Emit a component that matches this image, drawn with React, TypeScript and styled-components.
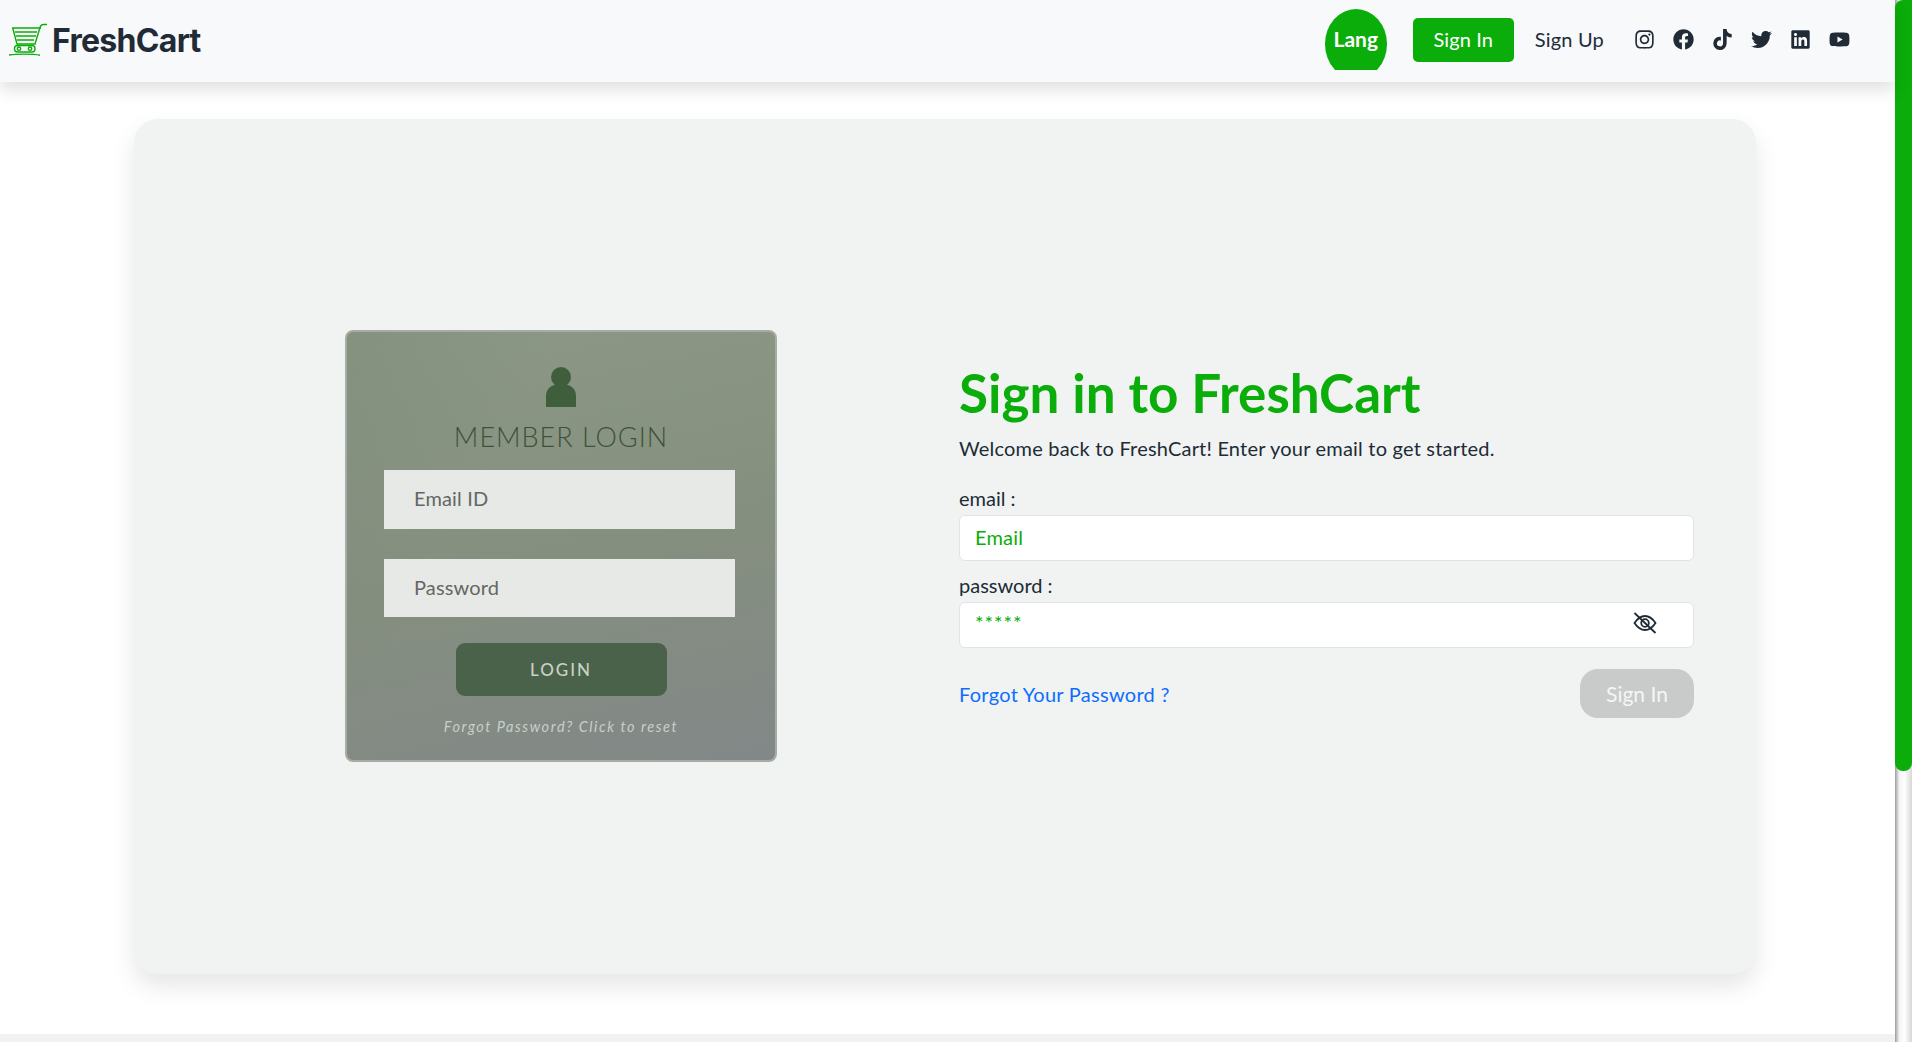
import { createGlobalStyle } from 'styled-components';
import styled from 'styled-components';
import { FaInstagram, FaFacebook, FaTiktok, FaTwitter, FaLinkedin, FaYoutube } from 'react-icons/fa';

const GlobalStyle = createGlobalStyle`
  html, body {
    margin: 0;
    height: 100%;
    overflow: hidden;
    background: #fff;
  }
  * {
    box-sizing: border-box;
  }
`;

const Shell = styled.div`
  display: flex;
  width: 1912px;
  height: 1042px;
  overflow: hidden;
  font-family: 'Lato', 'Open Sans', sans-serif;
`;

const Page = styled.div`
  flex: 1;
  min-width: 0;
  display: flex;
  flex-direction: column;
`;

const Navbar = styled.nav`
  height: 82px;
  flex: none;
  display: flex;
  align-items: flex-start;
  padding: 0 46px 0 8px;
  background: #f8f9fb;
  box-shadow: 0 8px 16px rgba(0, 0, 0, 0.12);
  position: relative;
  z-index: 2;
`;

const Brand = styled.a`
  display: flex;
  align-items: center;
  gap: 4px;
  height: 80px;
  font-family: 'Inter', sans-serif;
  font-weight: 700;
  font-size: 32px;
  letter-spacing: -0.7px;
  color: #212b36;
`;

const NavRight = styled.div`
  margin-left: auto;
  display: flex;
  align-items: flex-start;
`;

const LangClip = styled.div`
  width: 62px;
  height: 61px;
  margin-top: 9px;
  overflow: hidden;
`;

const LangCircle = styled.div`
  width: 62px;
  height: 70px;
  border-radius: 50%;
  background: #0aad0a;
  color: #fff;
  font-weight: 700;
  font-size: 21px;
  display: flex;
  align-items: flex-start;
  justify-content: center;
  padding-top: 17px;
`;

const SignInButton = styled.a`
  width: 101px;
  height: 44px;
  margin: 18px 0 0 26px;
  padding-bottom: 2px;
  border-radius: 5px;
  background: #0aad0a;
  color: #fff;
  font-size: 20px;
  letter-spacing: 0.1px;
  display: flex;
  align-items: center;
  justify-content: center;
`;

const SignUpLink = styled.a`
  margin: 26px 0 0 21px;
  color: #212b36;
  font-size: 20px;
  line-height: 26px;
  letter-spacing: 0.2px;
`;

const Socials = styled.div`
  display: flex;
  gap: 19px;
  margin: 29px 0 0 30px;
  color: #212b36;
  font-size: 21px;
`;

const SocialIcon = styled.span`
  width: 20px;
  height: 20px;
  display: flex;
  justify-content: center;
  overflow: visible;

  svg {
    flex: none;
  }
`;

const Main = styled.main`
  flex: 1;
  padding: 37px 139px 0 134px;
`;

const Card = styled.section`
  height: 855px;
  border-radius: 24px;
  background: #f0f3f2;
  box-shadow: 0 12px 24px rgba(0, 0, 0, 0.1);
  display: flex;
  align-items: flex-start;
  padding: 211px 0 0 211px;
`;

const LoginBox = styled.div`
  width: 432px;
  height: 432px;
  flex: none;
  border-radius: 8px;
  border: 2px solid #a6aea4;
  background:
    linear-gradient(118deg, rgba(120, 132, 118, 0.35) 0%, rgba(120, 132, 118, 0) 32%),
    linear-gradient(168deg, #8c9985 0%, #858f7f 52%, #828888 100%);
  display: flex;
  flex-direction: column;
  align-items: center;
  padding-top: 35px;
`;

const PersonIcon = styled.svg`
  width: 30px;
  height: 40px;
  display: block;
  flex: none;
`;

const LoginTitle = styled.h2`
  margin: 13px 0 16px;
  font-weight: 300;
  font-size: 27px;
  line-height: 34px;
  letter-spacing: 1px;
  color: #3c5239;
  text-transform: uppercase;
`;

const GhostField = styled.div<{ $tall?: boolean }>`
  width: 351px;
  height: ${(p) => (p.$tall ? 59 : 58)}px;
  flex: none;
  margin: 0 3px 30px 0;
  padding: 0 0 3px 30px;
  background: #e7e9e6;
  color: #646764;
  font-size: 20px;
  letter-spacing: 0.15px;
  display: flex;
  align-items: center;
`;

const LoginButton = styled.button`
  width: 211px;
  height: 53px;
  flex: none;
  margin-top: -4px;
  border: none;
  border-radius: 9px;
  background: #4a6249;
  color: #c7d1c5;
  font-family: inherit;
  font-size: 17px;
  font-weight: 500;
  letter-spacing: 2px;
`;

const ResetHint = styled.p`
  margin: 22px 0 0;
  font-size: 14.5px;
  font-style: italic;
  letter-spacing: 1.55px;
  color: #c9cec9;
`;

const FormColumn = styled.div`
  width: 735px;
  margin: 32px 0 0 182px;
`;

const Heading = styled.h1`
  margin: 0;
  font-size: 53px;
  line-height: 62px;
  font-weight: 700;
  color: #0aad0a;
`;

const Lead = styled.p`
  margin: 10px 0 22px;
  font-size: 20px;
  line-height: 28px;
  letter-spacing: 0.2px;
  color: #212b36;
`;

const FieldLabel = styled.label`
  display: block;
  margin-top: 10px;
  font-size: 20px;
  line-height: 28px;
  color: #212b36;
`;

const InputBox = styled.div`
  height: 46px;
  margin-top: 3px;
  padding: 0 15px 2px;
  background: #fff;
  border: 1px solid #dfe3e8;
  border-radius: 6px;
  display: flex;
  align-items: center;
  justify-content: space-between;
  color: #0aad0a;
  font-size: 20px;
  letter-spacing: 0.2px;
`;

const Stars = styled.span`
  align-self: flex-start;
  margin-top: 7px;
  font-size: 20px;
  letter-spacing: 1px;
`;

const EyeIcon = styled.svg`
  width: 26px;
  height: 22px;
  margin-right: 20px;
  margin-top: -3px;
`;

const FormFooter = styled.div`
  display: flex;
  align-items: center;
  justify-content: space-between;
  margin-top: 21px;
`;

const ForgotLink = styled.a`
  color: #0d6efd;
  font-size: 20px;
  letter-spacing: 0.28px;
`;

const DisabledButton = styled.button`
  width: 114px;
  height: 49px;
  border: none;
  border-radius: 18px;
  background: #c9cbca;
  color: #f5f5f5;
  font-family: inherit;
  font-size: 21px;
`;

const FooterStrip = styled.div`
  height: 8px;
  flex: none;
  background: #f0f3f2;
`;

const ScrollTrack = styled.div`
  width: 17px;
  flex: none;
  background: linear-gradient(90deg, #9c9c9c 0, #f4f4f4 25%, #ffffff 55%, #d8d8d8 100%);
`;

const ScrollThumb = styled.div`
  height: 771px;
  background: #0aad0a;
  border-radius: 8px 0 8px 8px;
`;

function CartLogo() {
  return (
    <svg width="40" height="34" viewBox="0 0 40 34" fill="none" stroke="#0aad0a" strokeWidth="1.4">
      <path d="M39 1.500h-3.500c-2 0-3 1-3.500 3L27 21H9L4.700 5H33" />
      <path d="M7 9h22M8 13h20M9 17h17" strokeWidth="1.6" />
      <rect x="6.500" y="22.500" width="20.500" height="6.500" rx="3" />
      <circle cx="11" cy="25.700" r="1.700" />
      <circle cx="22" cy="25.700" r="1.700" />
      <path d="M1 32c8-1.200 24-1.200 31 .2" />
    </svg>
  );
}

export default function App() {
  return (
    <Shell>
      <GlobalStyle />
      <Page>
        <Navbar>
          <Brand>
            <CartLogo />
            FreshCart
          </Brand>
          <NavRight>
            <LangClip>
              <LangCircle>Lang</LangCircle>
            </LangClip>
            <SignInButton>Sign In</SignInButton>
            <SignUpLink>Sign Up</SignUpLink>
            <Socials>
              <SocialIcon><FaInstagram /></SocialIcon>
              <SocialIcon><FaFacebook /></SocialIcon>
              <SocialIcon><FaTiktok /></SocialIcon>
              <SocialIcon><FaTwitter /></SocialIcon>
              <SocialIcon><FaLinkedin /></SocialIcon>
              <SocialIcon><FaYoutube /></SocialIcon>
            </Socials>
          </NavRight>
        </Navbar>
        <Main>
          <Card>
            <LoginBox>
              <PersonIcon viewBox="0 0 30 40">
                <circle cx="15" cy="10" r="10" fill="#3f5f3c" />
                <path d="M0 40V29C0 21 6 17 15 17s15 4 15 12v11z" fill="#3f5f3c" />
              </PersonIcon>
              <LoginTitle>Member Login</LoginTitle>
              <GhostField $tall>Email ID</GhostField>
              <GhostField>Password</GhostField>
              <LoginButton>LOGIN</LoginButton>
              <ResetHint>Forgot Password? Click to reset</ResetHint>
            </LoginBox>
            <FormColumn>
              <Heading>Sign in to FreshCart</Heading>
              <Lead>Welcome back to FreshCart! Enter your email to get started.</Lead>
              <FieldLabel>email :</FieldLabel>
              <InputBox>Email</InputBox>
              <FieldLabel>password :</FieldLabel>
              <InputBox>
                <Stars>*****</Stars>
                <EyeIcon viewBox="0 0 26 22" fill="none" stroke="#212b36" strokeWidth="1.8">
                  <path d="M2.500 11c3-4.500 6.500-7 10.500-7s7.500 2.500 10.500 7c-3 4.500-6.500 7-10.500 7s-7.500-2.500-10.500-7z" />
                  <circle cx="13" cy="11" r="3.800" />
                  <path d="M2.500 1l21 20" />
                </EyeIcon>
              </InputBox>
              <FormFooter>
                <ForgotLink>Forgot Your Password ?</ForgotLink>
                <DisabledButton>Sign In</DisabledButton>
              </FormFooter>
            </FormColumn>
          </Card>
        </Main>
        <FooterStrip />
      </Page>
      <ScrollTrack>
        <ScrollThumb />
      </ScrollTrack>
    </Shell>
  );
}
